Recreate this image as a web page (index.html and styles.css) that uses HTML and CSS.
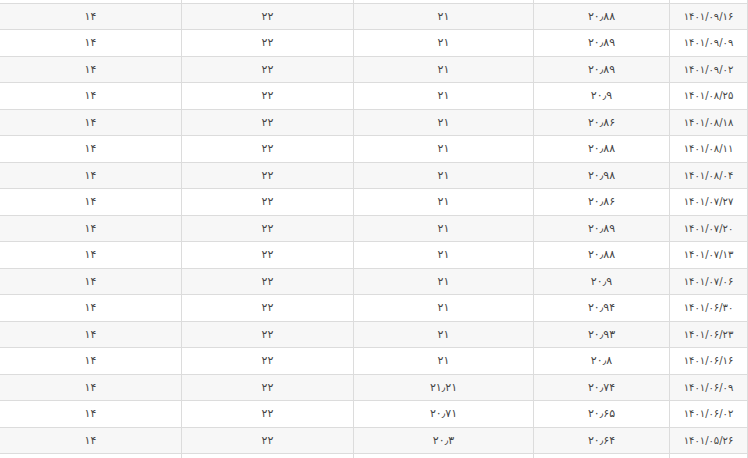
FILE: index.html
```html
<!DOCTYPE html>
<html lang="fa" dir="rtl">
<head>
<meta charset="utf-8">
<title>جدول</title>
<link rel="stylesheet" href="styles.css">
</head>
<body>
<div class="viewport">
<table class="grid">
<colgroup><col class="c-date"><col class="c-a"><col class="c-b"><col class="c-c"><col class="c-d"></colgroup>
<tbody>
<tr class="cut"><td></td><td></td><td></td><td></td><td></td></tr>
<tr><td>۱۴۰۱/۰۹/۱۶</td><td>۲۰٫۸۸</td><td>۲۱</td><td>۲۲</td><td>۱۴</td></tr>
<tr><td>۱۴۰۱/۰۹/۰۹</td><td>۲۰٫۸۹</td><td>۲۱</td><td>۲۲</td><td>۱۴</td></tr>
<tr><td>۱۴۰۱/۰۹/۰۲</td><td>۲۰٫۸۹</td><td>۲۱</td><td>۲۲</td><td>۱۴</td></tr>
<tr><td>۱۴۰۱/۰۸/۲۵</td><td>۲۰٫۹</td><td>۲۱</td><td>۲۲</td><td>۱۴</td></tr>
<tr><td>۱۴۰۱/۰۸/۱۸</td><td>۲۰٫۸۶</td><td>۲۱</td><td>۲۲</td><td>۱۴</td></tr>
<tr><td>۱۴۰۱/۰۸/۱۱</td><td>۲۰٫۸۸</td><td>۲۱</td><td>۲۲</td><td>۱۴</td></tr>
<tr><td>۱۴۰۱/۰۸/۰۴</td><td>۲۰٫۹۸</td><td>۲۱</td><td>۲۲</td><td>۱۴</td></tr>
<tr><td>۱۴۰۱/۰۷/۲۷</td><td>۲۰٫۸۶</td><td>۲۱</td><td>۲۲</td><td>۱۴</td></tr>
<tr><td>۱۴۰۱/۰۷/۲۰</td><td>۲۰٫۸۹</td><td>۲۱</td><td>۲۲</td><td>۱۴</td></tr>
<tr><td>۱۴۰۱/۰۷/۱۳</td><td>۲۰٫۸۸</td><td>۲۱</td><td>۲۲</td><td>۱۴</td></tr>
<tr><td>۱۴۰۱/۰۷/۰۶</td><td>۲۰٫۹</td><td>۲۱</td><td>۲۲</td><td>۱۴</td></tr>
<tr><td>۱۴۰۱/۰۶/۳۰</td><td>۲۰٫۹۴</td><td>۲۱</td><td>۲۲</td><td>۱۴</td></tr>
<tr><td>۱۴۰۱/۰۶/۲۳</td><td>۲۰٫۹۳</td><td>۲۱</td><td>۲۲</td><td>۱۴</td></tr>
<tr><td>۱۴۰۱/۰۶/۱۶</td><td>۲۰٫۸</td><td>۲۱</td><td>۲۲</td><td>۱۴</td></tr>
<tr><td>۱۴۰۱/۰۶/۰۹</td><td>۲۰٫۷۴</td><td>۲۱٫۲۱</td><td>۲۲</td><td>۱۴</td></tr>
<tr><td>۱۴۰۱/۰۶/۰۲</td><td>۲۰٫۶۵</td><td>۲۰٫۷۱</td><td>۲۲</td><td>۱۴</td></tr>
<tr><td>۱۴۰۱/۰۵/۲۶</td><td>۲۰٫۶۴</td><td>۲۰٫۳</td><td>۲۲</td><td>۱۴</td></tr>
<tr class="cut"><td></td><td></td><td></td><td></td><td></td></tr>
</tbody>
</table>
</div>
</body>
</html>
```
FILE: styles.css
```css
html, body {
  margin: 0;
  padding: 0;
  background: #fff;
}
.viewport {
  width: 748px;
  height: 458px;
  overflow: hidden;
}
.grid {
  width: 748px;
  margin-top: -24px;
  border-collapse: collapse;
  table-layout: fixed;
  font-family: "DejaVu Sans", "Noto Sans", sans-serif;
  font-size: 11px;
  color: #444;
}
.c-date { width: 78px; }
.c-a { width: 136px; }
.c-b { width: 180px; }
.c-c { width: 172px; }
.c-d { width: 182px; }
.grid td {
  border: 1px solid #dcdcdc;
  padding: 4px 6px;
  height: 17.5px;
  line-height: 17.5px;
  text-align: center;
  white-space: nowrap;
}
.grid td:first-child {
  font-size: 10px;
}
.grid tr:nth-child(even) td {
  background: #f7f7f7;
}
```
